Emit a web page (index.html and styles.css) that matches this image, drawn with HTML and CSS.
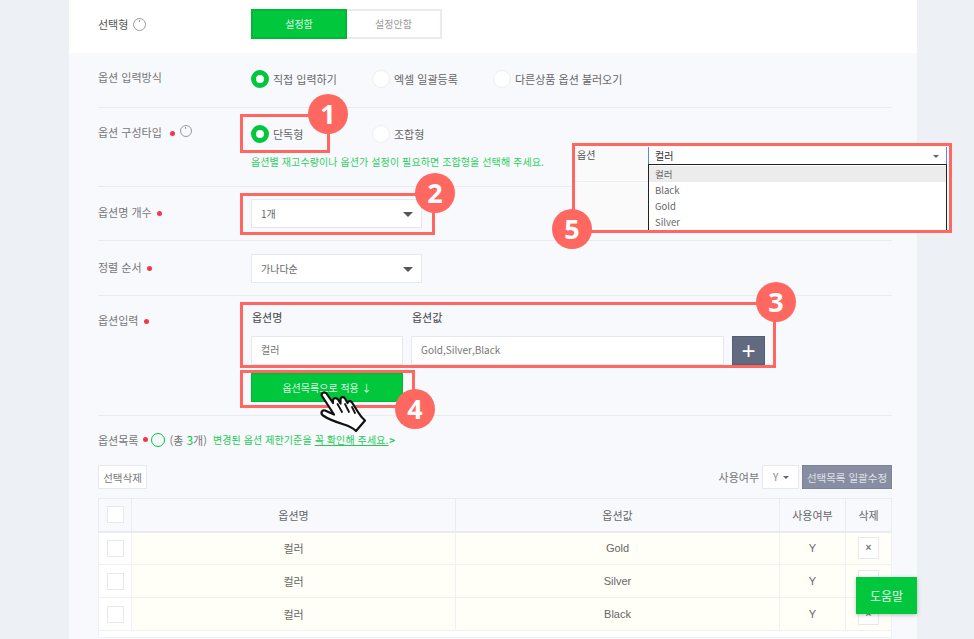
FILE: index.html
```html
<!DOCTYPE html>
<html lang="ko">
<head>
  <meta charset="UTF-8" />
  <title>옵션 설정</title>
  <link rel="stylesheet" href="styles.css">
</head>
<body>
  <div class="panel">
    <div class="top-row">
      <div class="top-label">선택형 <i class="info"></i></div>
      <div class="toggle">
        <div class="toggle-on">설정함</div>
        <div class="toggle-off">설정안함</div>
      </div>
    </div>

    <div class="form">
      <div class="row row-input-type">
        <div class="label">옵션 입력방식</div>
        <div class="radios">
          <div class="radio on"><i></i>직접 입력하기</div>
          <div class="radio"><i></i>엑셀 일괄등록</div>
          <div class="radio"><i></i>다른상품 옵션 불러오기</div>
        </div>
      </div>

      <div class="row row-type">
        <div class="label">옵션 구성타입 <b class="dot"></b><i class="info small"></i></div>
        <div>
          <div class="radios">
            <div class="radio on"><i></i>단독형</div>
            <div class="radio"><i></i>조합형</div>
          </div>
          <p class="help">옵션별 재고수량이나 옵션가 설정이 필요하면 조합형을 선택해 주세요.</p>
        </div>
      </div>

      <div class="row row-select">
        <div class="label">옵션명 개수 <b class="dot"></b></div>
        <div class="select">1개<span class="caret"></span></div>
      </div>

      <div class="row row-select row-sort">
        <div class="label">정렬 순서 <b class="dot"></b></div>
        <div class="select">가나다순<span class="caret"></span></div>
      </div>

      <div class="row row-option">
        <div class="label">옵션입력 <b class="dot"></b></div>
        <div>
          <div class="option-grid">
            <div class="field-name">옵션명</div>
            <div class="field-name">옵션값</div>
            <div></div>
            <div class="input">컬러</div>
            <div class="input">Gold,Silver,Black</div>
            <button class="plus">+</button>
          </div>
          <button class="apply">옵션목록으로 적용 ↓</button>
        </div>
      </div>

      <div class="list">
        <div class="list-title">
          <span class="label">옵션목록</span><b class="dot"></b><i class="ring"></i>
          <span class="count">(총 <em>3</em>개)</span>
          <span class="notice">변경된 옵션 제한기준을 <u>꼭 확인해 주세요.</u> <b class="more">&gt;</b></span>
        </div>
        <div class="toolbar">
          <button class="btn-delete">선택삭제</button>
          <div class="toolbar-right">
            <span>사용여부</span>
            <div class="mini-select">Y<span class="caret tiny"></span></div>
            <button class="btn-bulk">선택목록 일괄수정</button>
          </div>
        </div>
        <table class="options">
          <thead>
            <tr>
              <th class="col-check"><i class="check"></i></th>
              <th class="col-name">옵션명</th>
              <th class="col-value">옵션값</th>
              <th class="col-use">사용여부</th>
              <th class="col-del">삭제</th>
            </tr>
          </thead>
          <tbody>
            <tr><td><i class="check"></i></td><td>컬러</td><td>Gold</td><td>Y</td><td><button class="del">×</button></td></tr>
            <tr><td><i class="check"></i></td><td>컬러</td><td>Silver</td><td>Y</td><td><button class="del">×</button></td></tr>
            <tr><td><i class="check"></i></td><td>컬러</td><td>Black</td><td>Y</td><td><button class="del">×</button></td></tr>
            <tr class="tail"><td colspan="5"></td></tr>
          </tbody>
        </table>
      </div>
    </div>
  </div>

  <!-- preview of the storefront select, shown over the form -->
  <div class="preview">
    <div class="preview-label">옵션</div>
    <div class="preview-body">
      <div class="preview-value">컬러<span class="caret tiny"></span></div>
      <ul class="preview-list">
        <li class="active">컬러</li>
        <li>Black</li>
        <li>Gold</li>
        <li>Silver</li>
      </ul>
    </div>
  </div>

  <!-- tutorial marks -->
  <div class="mark box-1"></div>
  <div class="mark box-2"></div>
  <div class="mark box-3"></div>
  <div class="mark box-4"></div>
  <div class="mark box-5"></div>
  <div class="num num-1">1</div>
  <div class="num num-2">2</div>
  <div class="num num-3">3</div>
  <div class="num num-4">4</div>
  <div class="num num-5">5</div>

  <svg class="hand" viewBox="0 0 54 46" width="54" height="46">
    <path d="M8 8C6.500 5 10.500 3 12.500 5.500L19 15 19 12C19.500 9.500 22.500 9.500 24 11.500L26.500 15.500 26.500 11C27 8.500 30 8.500 31 10.500L33.500 15C34 12.500 37 12.500 38 14.500L44 24C46 27.500 48 30 51 32.500L42 43C39 40 35 38 30 36.500 22 34 14 31 9 27.500 6 25 8 21.500 11 22.500L20 26.500Z" fill="#fff" stroke="#111" stroke-width="2.200" stroke-linejoin="round"/>
    <path d="M23.500 16L28 24M31 16L35 24M38 19L41 25" fill="none" stroke="#111" stroke-width="1.800" stroke-linecap="round"/>
  </svg>

  <button class="help-btn">도움말</button>
</body>
</html>
```

FILE: styles.css
```css
:root {
  --green: #00c73c;
  --line: #e9ebf0;
  --soft: #f8f9fd;
  --coral: #ff6860;
  --text: #777;
}

* {
  box-sizing: border-box;
}

html, body {
  height: 100%;
}

body {
  position: relative;
  margin: 0;
  overflow: hidden;
  background: #edf0f5;
  color: var(--text);
  font-family: "Noto Sans CJK KR", "Noto Sans", sans-serif;
  font-size: 11px;
}

button {
  font-family: inherit;
  cursor: pointer;
}

.panel {
  width: 848px;
  height: 639px;
  margin-left: 69px;
  background: var(--soft);
}

/* top */
.top-row {
  display: flex;
  align-items: center;
  height: 53px;
  padding: 0 0 5px 29px;
  background: #fff;
}

.top-label {
  display: flex;
  align-items: center;
  gap: 5px;
  width: 153px;
  color: #555;
}

.toggle {
  display: flex;
  width: 191px;
  height: 30px;
  line-height: 26px;
  text-align: center;
  font-size: 10px;
}

.toggle-on {
  width: 96px;
  background: var(--green);
  border: 2px solid #00b835;
  color: #dff8e6;
}

.toggle-off {
  flex: 1;
  border: 2px solid #e9ebf0;
  border-left: 0;
  color: #999;
}

.info {
  display: inline-block;
  position: relative;
  width: 13px;
  height: 13px;
  border: 1px solid #999;
  border-radius: 50%;
}

.info::after {
  content: "";
  position: absolute;
  top: 1px;
  left: 5px;
  width: 1px;
  height: 2px;
  background: #999;
}

.info.small {
  width: 12px;
  height: 12px;
  margin-left: 5px;
}

.info.small::after {
  left: 4px;
}

.dot {
  display: inline-block;
  width: 5px;
  height: 5px;
  margin-left: 2px;
  border-radius: 50%;
  background: #f5364a;
  vertical-align: 1px;
}

/* form rows */
.form {
  padding: 0 25px 0 29px;
}

.row {
  display: grid;
  grid-template-columns: 153px 1fr;
  border-bottom: 1px solid var(--line);
}

.row-input-type {
  height: 55px;
  padding-top: 16px;
}

.row-type {
  height: 79px;
  padding-top: 16px;
}

.row-type .dot {
  margin-left: 5px;
}

.row-select {
  height: 54px;
  padding-top: 12px;
}

.row-sort {
  height: 55px;
  padding-top: 13px;
}

.row-select .label {
  padding-top: 5px;
}

.row-option {
  height: 120px;
  padding-top: 12px;
}

.row-option .label {
  padding-top: 4px;
}

.label {
  line-height: 16px;
}

.radios {
  display: flex;
  height: 20px;
}

.radio {
  display: flex;
  align-items: center;
  gap: 4px;
  min-width: 121px;
  color: #666;
}

.radio i {
  width: 18px;
  height: 18px;
  border: 1px solid #eceef2;
  border-radius: 50%;
  background: #fff;
}

.radio.on i {
  border: 5px solid var(--green);
}

.help {
  margin: 10px 0 0;
  font-size: 10px;
  line-height: 16px;
  letter-spacing: 0.1px;
  color: #2fd05f;
}

.select {
  position: relative;
  width: 171px;
  height: 29px;
  padding-left: 9px;
  border: 1px solid #e6e8ee;
  background: #fff;
  font-size: 10px;
  line-height: 27px;
  color: #666;
}

.caret {
  position: absolute;
  right: 9px;
  top: 12px;
  border: 4px solid transparent;
  border-top: 5px solid #555;
  border-bottom: 0;
  width: 0;
  height: 0;
  transform: scaleX(1.25);
}

.caret.tiny {
  border-width: 3px;
  border-bottom: 0;
  border-top-color: #666;
  transform: none;
}

/* option input */
.option-grid {
  display: grid;
  grid-template-columns: 152px 313px 33px;
  grid-template-rows: 19px 29px;
  column-gap: 8px;
  row-gap: 9px;
}

.field-name {
  padding-left: 1px;
  color: #4a4a4a;
  line-height: 18px;
  -webkit-text-stroke: 0.1px #4a4a4a;
}

.input {
  padding-left: 9px;
  border: 1px solid #e6e8ee;
  background: #fff;
  line-height: 25px;
  font-size: 10px;
  color: #777;
}

.plus {
  padding: 0;
  border: 1px solid #565e75;
  background: #626a80;
  color: #fff;
  font-family: "Liberation Sans", sans-serif;
  font-size: 24px;
  line-height: 24px;
}

.apply {
  display: block;
  width: 152px;
  height: 29px;
  margin-top: 8px;
  border: 1px solid #00b835;
  background: var(--green);
  color: #dff8e6;
  font-size: 10px;
}

/* list */
.list-title {
  display: flex;
  align-items: center;
  height: 49px;
  padding-bottom: 2px;
}

.list-title .dot {
  margin-left: 5px;
}

.ring {
  width: 14px;
  height: 14px;
  margin-left: 3px;
  border: 1.500px solid var(--green);
  border-radius: 50%;
}

.count {
  margin-left: 4px;
}

.count em {
  font-style: normal;
  font-size: 12px;
  color: var(--green);
}

.notice {
  margin-left: 6px;
  font-size: 10px;
  letter-spacing: 0.1px;
  color: #22cb56;
}

.more {
  margin-left: -2px;
}

.toolbar {
  display: flex;
  justify-content: space-between;
  height: 24px;
  margin-bottom: 9px;
}

.btn-delete {
  width: 49px;
  padding: 0;
  border: 1px solid #e6e8ee;
  background: #fff;
  color: #777;
  font-size: 10.500px;
}

.toolbar-right {
  display: flex;
  align-items: center;
}

.mini-select {
  position: relative;
  width: 37px;
  height: 24px;
  margin: 0 3px 0 3px;
  padding-left: 10px;
  border: 1px solid #e6e8ee;
  background: #fff;
  line-height: 22px;
  font-size: 10px;
  color: #888;
}

.mini-select .caret {
  top: 10px;
  right: 9px;
}

.btn-bulk {
  width: 90px;
  height: 24px;
  padding: 0;
  border: 1px solid #7d8498;
  background: #878ea2;
  color: #dfe2ea;
  font-size: 10.500px;
}

/* table */
.options {
  width: 794px;
  border-collapse: collapse;
  table-layout: fixed;
  text-align: center;
  border: 1px solid var(--line);
}

.options th {
  height: 33px;
  padding: 0;
  border: 1px solid var(--line);
  border-bottom-width: 2px;
  background: var(--soft);
  font-weight: 400;
  color: #666;
}

.options td {
  height: 33px;
  padding: 0;
  border: 1px solid #f0f1f5;
  background: #fffff7;
  color: #666;
}

.options td:first-child {
  background: #fff;
}

.options .tail td {
  height: 7px;
  background: #fff;
}

.col-check { width: 33px; }
.col-name { width: 324px; }
.col-value { width: 324px; }
.col-use { width: 66px; }

.options td:nth-child(n+3):nth-child(-n+4) {
  font-family: "Liberation Sans", sans-serif;
}

.check {
  display: block;
  width: 17px;
  height: 17px;
  margin-left: 8px;
  border: 1px solid #e6e8ee;
  background: #fff;
}

.del {
  width: 21px;
  height: 22px;
  padding: 0;
  border: 1px solid #e6e8ee;
  background: #fff;
  color: #777;
  font-family: "Liberation Sans", sans-serif;
  font-size: 10px;
  font-weight: 700;
  line-height: 18px;
}

/* select preview */
.preview {
  position: absolute;
  left: 572px;
  top: 143px;
  display: flex;
  width: 380px;
  height: 90px;
  background: #fafafa;
  overflow: hidden;
}

.preview-label {
  width: 76px;
  height: 39px;
  padding: 4px 0 0 5px;
  border-bottom: 1px solid #eee;
  font-size: 10px;
  line-height: 16px;
  color: #555;
}

.preview-body {
  width: 299px;
}

.preview-value {
  position: relative;
  height: 17px;
  margin-top: 4px;
  padding-left: 6px;
  border-left: 1px solid #5f83e6;
  border-right: 1px solid #5f83e6;
  background: #fff;
  font-size: 10px;
  line-height: 17px;
  color: #333;
}

.preview-value .caret {
  top: 8px;
  right: 7px;
}

.preview-list {
  margin: 0;
  padding: 1px 0 0;
  list-style: none;
  height: 70px;
  border: 1px solid #222;
  background: #fff;
  font-size: 9.500px;
  line-height: 16px;
  color: #666;
}

.preview-list li {
  padding-left: 6px;
}

.preview-list .active {
  background: #ececec;
}

/* tutorial marks */
.mark {
  position: absolute;
  border: 3px solid var(--coral);
}

.box-1 { left: 240px; top: 114px; width: 90px; height: 39px; }
.box-2 { left: 240px; top: 193px; width: 195px; height: 42px; }
.box-3 { left: 240px; top: 302px; width: 536px; height: 66px; }
.box-4 { left: 240px; top: 370px; width: 175px; height: 38px; }
.box-5 { left: 572px; top: 143px; width: 380px; height: 90px; }

.num {
  position: absolute;
  width: 40px;
  height: 40px;
  border-radius: 50%;
  background: var(--coral);
  color: #fff;
  font-family: "Open Sans", sans-serif;
  font-size: 27px;
  font-weight: 700;
  line-height: 40px;
  text-align: center;
}

.num-1 { left: 308px; top: 94px; }
.num-2 { left: 415px; top: 173px; }
.num-3 { left: 756px; top: 282px; }
.num-4 { left: 395px; top: 389px; }
.num-5 { left: 552px; top: 209px; }

.hand {
  position: absolute;
  left: 314px;
  top: 388px;
}

.help-btn {
  position: absolute;
  left: 856px;
  top: 577px;
  width: 61px;
  height: 37px;
  padding: 0;
  border: 0;
  background: var(--green);
  box-shadow: 0 1px 4px rgba(0,0,0,0.25);
  color: #e6fbec;
  font-size: 12px;
}
```
